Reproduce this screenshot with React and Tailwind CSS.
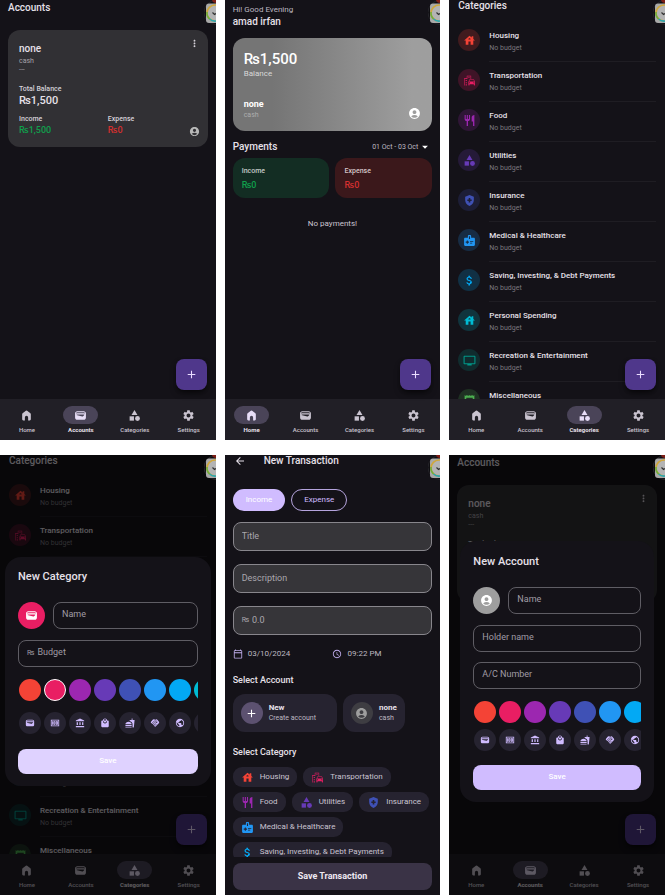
import React from "react";
import {
  MdAccountBalance,
  MdAccountCircle,
  MdAdd,
  MdArrowBack,
  MdArrowDropDown,
  MdAttachMoney,
  MdCategory,
  MdEmojiTransportation,
  MdFastfood,
  MdHandshake,
  MdHealthAndSafety,
  MdHouse,
  MdLocalMall,
  MdMedicalInformation,
  MdMoney,
  MdMoreVert,
  MdOutlineCalendarToday,
  MdPublic,
  MdReceipt,
  MdRestaurant,
  MdSchedule,
  MdSettings,
  MdTv,
  MdWallet,
} from "react-icons/md";

const categories = [
  { name: "Housing", Icon: MdHouse, fg: "text-[#f44336]", bg: "bg-[#f44336]/20" },
  { name: "Transportation", Icon: MdEmojiTransportation, fg: "text-[#e91e63]", bg: "bg-[#e91e63]/20" },
  { name: "Food", Icon: MdRestaurant, fg: "text-[#9c27b0]", bg: "bg-[#9c27b0]/20" },
  { name: "Utilities", Icon: MdCategory, fg: "text-[#673ab7]", bg: "bg-[#673ab7]/20" },
  { name: "Insurance", Icon: MdHealthAndSafety, fg: "text-[#3f51b5]", bg: "bg-[#3f51b5]/20" },
  { name: "Medical & Healthcare", Icon: MdMedicalInformation, fg: "text-[#2196f3]", bg: "bg-[#2196f3]/20" },
  { name: "Saving, Investing, & Debt Payments", Icon: MdAttachMoney, fg: "text-[#03a9f4]", bg: "bg-[#03a9f4]/20" },
  { name: "Personal Spending", Icon: MdHouse, fg: "text-[#00bcd4]", bg: "bg-[#00bcd4]/20" },
  { name: "Recreation & Entertainment", Icon: MdTv, fg: "text-[#009688]", bg: "bg-[#009688]/20" },
  { name: "Miscellaneous", Icon: MdReceipt, fg: "text-[#4caf50]", bg: "bg-[#4caf50]/20" },
];

const swatches = [
  { name: "Red", bg: "bg-[#f44336]" },
  { name: "Pink", bg: "bg-[#e91e63]" },
  { name: "Purple", bg: "bg-[#9c27b0]" },
  { name: "Deep purple", bg: "bg-[#673ab7]" },
  { name: "Indigo", bg: "bg-[#3f51b5]" },
  { name: "Blue", bg: "bg-[#2196f3]" },
  { name: "Light blue", bg: "bg-[#03a9f4]" },
  { name: "Cyan", bg: "bg-[#00bcd4]" },
];

const glyphs = [
  { name: "Wallet", Icon: MdWallet },
  { name: "Money", Icon: MdMoney },
  { name: "Bank", Icon: MdAccountBalance },
  { name: "Shopping", Icon: MdLocalMall },
  { name: "Fast food", Icon: MdFastfood },
  { name: "Handshake", Icon: MdHandshake },
  { name: "World", Icon: MdPublic },
  { name: "Other", Icon: null },
];

function HomeIcon({ className }) {
  return (
    <svg viewBox="0 0 24 24" fill="currentColor" className={className} aria-hidden="true">
      <path d="M10.8 3.4a2 2 0 0 1 2.4 0l6 4.6a2 2 0 0 1 .8 1.6V19a2 2 0 0 1-2 2h-3v-5.5a3 3 0 0 0-6 0V21H6a2 2 0 0 1-2-2V9.600a2 2 0 0 1 .8-1.600z" />
    </svg>
  );
}

/* Floating shortcut bubble that peeks in from the right edge of the screen. */
function EdgeBubble() {
  return (
    <svg viewBox="0 0 12 26" className="absolute right-0 top-0 z-30 h-[26px] w-3" aria-hidden="true">
      <circle cx="12" cy="12.500" r="12" fill="#0f0e12" stroke="#26252a" strokeWidth="1" />
      <path d="M8 0h4v3a4 4 0 0 1-4-3z" fill="#7d1d16" />
      <rect x="2" y="3.500" width="18" height="19.500" rx="3" fill="#a9a9a9" />
      <circle cx="11" cy="13" r="8" fill="#b4b4b4" stroke="#d0a73a" strokeWidth="1.600" />
      <path d="M3 12a8 8 0 0 0 2.600 7" fill="none" stroke="#6fae3c" strokeWidth="1.600" />
      <path d="M5.600 19A8 8 0 0 0 12 21" fill="none" stroke="#27a7b8" strokeWidth="1.600" />
      <path d="M8.500 12.500l2 2 1.500-1" fill="none" stroke="#333" strokeWidth="1.200" />
    </svg>
  );
}

function Phone({ children }) {
  return (
    <section className="relative flex min-h-0 min-w-0 flex-col overflow-hidden bg-[#141218] text-[#e6e0e9]">
      {children}
      <EdgeBubble />
    </section>
  );
}

function NavBar({ active }) {
  const items = [
    { name: "Home", Icon: HomeIcon },
    { name: "Accounts", Icon: MdWallet },
    { name: "Categories", Icon: MdCategory },
    { name: "Settings", Icon: MdSettings },
  ];
  return (
    <nav className="grid shrink-0 grid-cols-4 bg-[#211f26] pt-[7px] pb-[6px]">
      {items.map(({ name, Icon }) => (
        <a key={name} href="#" className="flex flex-col items-center gap-px">
          <span
            className={
              name === active
                ? "flex h-[18px] w-[35px] items-center justify-center rounded-full bg-[#4a4458] text-[#e8def8]"
                : "flex h-[18px] w-[35px] items-center justify-center rounded-full text-[#cac4d0]"
            }
          >
            <Icon className="size-[13px]" />
          </span>
          <span
            className={
              name === active
                ? "text-[6px] leading-[9px] font-bold text-[#e6e0e9]"
                : "text-[6px] leading-[9px] font-medium text-[#cac4d0]"
            }
          >
            {name}
          </span>
        </a>
      ))}
    </nav>
  );
}

function Fab() {
  return (
    <button
      type="button"
      aria-label="Add"
      className="absolute right-[9px] bottom-[50px] flex size-[31px] items-center justify-center rounded-lg bg-[#4f378b] text-[#eaddff] shadow-md shadow-black/50"
    >
      <MdAdd className="size-[13px]" />
    </button>
  );
}

function AccountsScreen() {
  return (
    <>
      <main className="min-h-0 flex-1 overflow-hidden px-2">
        <h1 className="h-[30px] text-[10px] leading-4 font-medium">Accounts</h1>
        <article className="relative rounded-xl bg-[#313034] px-[11px] pt-3 pb-[11px]">
          <h2 className="text-[10px] leading-[14px] font-medium">none</h2>
          <p className="text-[7px] leading-[10px] text-[#a5a2a9]">cash</p>
          <p className="text-[7px] leading-[9px] text-[#a5a2a9]">---</p>
          <p className="mt-[9px] text-[7px] leading-[10px] font-medium text-[#d5d0d8]">Total Balance</p>
          <p className="text-[11px] leading-[14px] font-medium">₨1,500</p>
          <div className="mt-1.5 grid grid-cols-2">
            <div>
              <p className="text-[7px] leading-[10px] font-medium text-[#d5d0d8]">Income</p>
              <p className="text-[9px] leading-3 font-medium text-[#109f4c]">₨1,500</p>
            </div>
            <div>
              <p className="text-[7px] leading-[10px] font-medium text-[#d5d0d8]">Expense</p>
              <p className="text-[9px] leading-3 font-medium text-[#d32f2f]">₨0</p>
            </div>
          </div>
          <button type="button" aria-label="More" className="absolute top-2 right-2">
            <MdMoreVert className="size-[11px] text-[#d5d0d8]" />
          </button>
          <MdAccountCircle className="absolute right-2 bottom-[10px] size-[11px] text-[#b8b8b8]" />
        </article>
      </main>
      <NavBar active="Accounts" />
      <Fab />
    </>
  );
}

function CategoriesScreen() {
  return (
    <>
      <main className="min-h-0 flex-1 overflow-hidden px-[9px]">
        <h1 className="h-[22px] text-[10px] leading-3 font-medium">Categories</h1>
        <ul>
          {categories.map(({ name, Icon, fg, bg }) => (
            <li key={name} className="flex gap-[9px] pt-[7px]">
              <span className={`flex size-[22px] shrink-0 items-center justify-center rounded-full ${bg} ${fg}`}>
                <Icon className="size-[13px]" />
              </span>
              <div className="min-w-0 flex-1 border-b border-[#1f1d23] pt-px pb-[7px]">
                <p className="text-[8px] leading-3 font-medium whitespace-nowrap">{name}</p>
                <p className="text-[7px] leading-3 text-[#7b787f]">No budget</p>
              </div>
            </li>
          ))}
        </ul>
      </main>
      <NavBar active="Categories" />
      <Fab />
    </>
  );
}

function HomeScreen() {
  return (
    <>
      <main className="min-h-0 flex-1 overflow-hidden px-2 pt-1">
        <p className="text-[8px] leading-[11px] text-[#bdb8c0]">Hi! Good Evening</p>
        <h1 className="text-[10px] leading-[14px] font-medium">amad irfan</h1>
        <article className="mt-[9px] rounded-xl bg-linear-to-r from-[#757575] from-20% to-[#9e9e9e] to-90% p-[11px] text-white">
          <p className="text-[15px] leading-5 font-medium">₨1,500</p>
          <p className="text-[8px] leading-[10px] text-[#d8d8d8]">Balance</p>
          <div className="mt-[19px] flex items-center justify-between">
            <div>
              <h2 className="text-[9px] leading-3 font-bold">none</h2>
              <p className="text-[7px] leading-[10px] text-[#adadad]">cash</p>
            </div>
            <MdAccountCircle className="mt-2 size-[13px]" />
          </div>
        </article>
        <div className="mt-2 flex items-center justify-between">
          <h2 className="text-[10px] leading-4 font-medium">Payments</h2>
          <button type="button" className="flex items-center text-[7px] text-[#bdb8c0]">
            01 Oct - 03 Oct
            <MdArrowDropDown className="size-[14px] text-white" />
          </button>
        </div>
        <div className="mt-[3px] grid grid-cols-2 gap-1.5">
          <div className="rounded-xl bg-[#132d23] px-[9px] pt-2 pb-[7px]">
            <p className="text-[7px] leading-[11px] font-medium text-[#c5ccc8]">Income</p>
            <p className="mt-0.5 text-[9px] leading-3 font-medium text-[#109f4c]">₨0</p>
          </div>
          <div className="rounded-xl bg-[#3b181b] px-[9px] pt-2 pb-[7px]">
            <p className="text-[7px] leading-[11px] font-medium text-[#d4c6c8]">Expense</p>
            <p className="mt-0.5 text-[9px] leading-3 font-medium text-[#d32f2f]">₨0</p>
          </div>
        </div>
        <p className="mt-5 text-center text-[8px] leading-3 text-[#cac4d0]">No payments!</p>
      </main>
      <NavBar active="Home" />
      <Fab />
    </>
  );
}

function OutlinedInput({ label, prefix }) {
  return (
    <label className="flex h-[27px] w-full min-w-0 items-center gap-[3px] rounded-lg border border-[#5f5d64] px-2">
      {prefix && <span className="text-[7px] text-[#a09ca5]">{prefix}</span>}
      <input
        type="text"
        aria-label={label}
        placeholder={label}
        className="w-full min-w-0 bg-transparent text-[9px] text-[#e6e0e9] outline-none placeholder:text-[#a09ca5]"
      />
    </label>
  );
}

function Swatches({ selected }) {
  return (
    <div className="flex gap-[3px] overflow-hidden px-px">
      {swatches.map(({ name, bg }) => (
        <button
          key={name}
          type="button"
          aria-label={name}
          className={
            name === selected
              ? `size-[22px] shrink-0 rounded-full border border-white ${bg}`
              : `size-[22px] shrink-0 rounded-full ${bg}`
          }
        />
      ))}
    </div>
  );
}

function Glyphs() {
  return (
    <div className="flex gap-[3px] overflow-hidden px-px">
      {glyphs.map(({ name, Icon }) => (
        <button
          key={name}
          type="button"
          aria-label={name}
          className="flex size-[22px] shrink-0 items-center justify-center rounded-full bg-[#262330] text-[#d0bcff]"
        >
          {Icon && <Icon className="size-[10px]" />}
        </button>
      ))}
    </div>
  );
}

function Scrim({ children }) {
  return <div className="absolute inset-0 z-10 flex items-center bg-black/60 pb-2">{children}</div>;
}

function NewCategoryDialog() {
  return (
    <Scrim>
      <form role="dialog" aria-label="New Category" className="mx-[5px] min-w-0 flex-1 rounded-2xl bg-[#141218] px-[13px] py-3">
        <h2 className="text-[11px] leading-4 font-medium">New Category</h2>
        <div className="mt-[17px] flex gap-2">
          <span className="flex size-[27px] shrink-0 items-center justify-center rounded-full bg-[#e91e63] text-white">
            <MdWallet className="size-[13px]" />
          </span>
          <OutlinedInput label="Name" />
        </div>
        <div className="mt-[11px] flex">
          <OutlinedInput label="Budget" prefix="₨" />
        </div>
        <div className="mt-3">
          <Swatches selected="Pink" />
        </div>
        <div className="mt-[11px]">
          <Glyphs />
        </div>
        <button type="button" className="mt-[15px] block h-[25px] w-full rounded-lg bg-[#dfd2ff] text-[8px] font-medium text-white">
          Save
        </button>
      </form>
    </Scrim>
  );
}

function NewAccountDialog() {
  return (
    <Scrim>
      <form role="dialog" aria-label="New Account" className="mx-[11px] min-w-0 flex-1 rounded-2xl bg-[#141218] px-[13px] pt-[13px] pb-3">
        <h2 className="text-[11px] leading-4 font-medium">New Account</h2>
        <div className="mt-[17px] flex gap-2">
          <span className="flex size-[27px] shrink-0 items-center justify-center rounded-full bg-[#9e9e9e] text-white">
            <MdAccountCircle className="size-[13px]" />
          </span>
          <OutlinedInput label="Name" />
        </div>
        <div className="mt-[11px] flex flex-col gap-[10px]">
          <OutlinedInput label="Holder name" />
          <OutlinedInput label="A/C Number" />
        </div>
        <div className="mt-3">
          <Swatches />
        </div>
        <div className="mt-[6px]">
          <Glyphs />
        </div>
        <button type="button" className="mt-[14px] block h-[25px] w-full rounded-lg bg-[#d0bcff] text-[8px] font-medium text-white">
          Save
        </button>
      </form>
    </Scrim>
  );
}

function FilledInput({ label, prefix }) {
  return (
    <label className="flex h-[29px] items-center gap-[3px] rounded-lg border border-[#88868c] bg-[#363539] px-2">
      {prefix && <span className="text-[7px] text-[#aaa7ae]">{prefix}</span>}
      <input
        type="text"
        aria-label={label}
        placeholder={label}
        className="w-full min-w-0 bg-transparent text-[9px] text-[#e6e0e9] outline-none placeholder:text-[#aaa7ae]"
      />
    </label>
  );
}

function NewTransactionScreen() {
  return (
    <form className="flex min-h-0 flex-1 flex-col px-2">
      <div className="min-h-0 flex-1 overflow-hidden">
        <header className="flex h-[34px] items-start gap-[18px] pl-px">
          <button type="button" aria-label="Back">
            <MdArrowBack className="size-3" />
          </button>
          <h1 className="text-[10px] leading-3 font-medium">New Transaction</h1>
        </header>
        <div className="flex gap-1.5">
          <button type="button" className="h-[22px] rounded-full bg-[#d0bcff] px-[13px] text-[8px] text-white">
            Income
          </button>
          <button type="button" className="h-[22px] rounded-full border border-[#b5a4dd] px-3 text-[8px] text-[#d0bcff]">
            Expense
          </button>
        </div>
        <div className="mt-[11px] flex flex-col gap-[13px]">
          <FilledInput label="Title" />
          <FilledInput label="Description" />
          <FilledInput label="0.0" prefix="₨" />
        </div>
        <div className="mt-[13px] grid grid-cols-2 text-[8px] leading-3 text-[#bdb8c0]">
          <button type="button" className="flex items-center gap-[5px]">
            <MdOutlineCalendarToday className="size-[10px] text-[#c0adec]" />
            03/10/2024
          </button>
          <button type="button" className="flex items-center gap-[5px]">
            <MdSchedule className="size-[10px] text-[#c0adec]" />
            09:22 PM
          </button>
        </div>
        <h2 className="mt-[14px] text-[9px] leading-3 font-medium">Select Account</h2>
        <div className="mt-2 flex gap-1.5">
          <button type="button" className="flex h-[38px] items-center gap-1.5 rounded-xl bg-[#262330] pr-[21px] pl-2 text-left">
            <span className="flex size-[22px] items-center justify-center rounded-full bg-[#5c5170] text-white">
              <MdAdd className="size-[13px]" />
            </span>
            <span>
              <span className="block text-[8px] leading-[10px] font-bold">New</span>
              <span className="block text-[7px] leading-[10px] text-[#bdb8c0]">Create account</span>
            </span>
          </button>
          <button type="button" className="flex h-[38px] items-center gap-1.5 rounded-xl bg-[#262330] px-2 text-left">
            <span className="flex size-[22px] items-center justify-center rounded-full bg-[#3e3d42] text-[#9e9e9e]">
              <MdAccountCircle className="size-[13px]" />
            </span>
            <span>
              <span className="block text-[8px] leading-[10px] font-bold">none</span>
              <span className="block text-[7px] leading-[10px] text-[#bdb8c0]">cash</span>
            </span>
          </button>
        </div>
        <h2 className="mt-[14px] text-[9px] leading-3 font-medium">Select Category</h2>
        <div className="mt-[9px] flex flex-wrap gap-x-1.5 gap-y-[5px]">
          {categories.slice(0, 7).map(({ name, Icon, fg }) => (
            <button
              key={name}
              type="button"
              className="flex h-5 items-center gap-1.5 rounded-[9px] bg-[#262330] px-2 text-[8px] whitespace-nowrap text-[#cac4d0]"
            >
              <Icon className={`size-[13px] ${fg}`} />
              {name}
            </button>
          ))}
        </div>
      </div>
      <button type="button" className="mt-1.5 mb-[5px] h-[27px] shrink-0 rounded-lg bg-[#3a3346] text-[9px] font-bold text-[#eee9f2]">
        Save Transaction
      </button>
    </form>
  );
}

export default function App() {
  return (
    <div className="grid h-screen grid-cols-3 grid-rows-2 gap-x-[9px] gap-y-[15px] overflow-hidden bg-white pr-px font-['Roboto','Noto_Sans',sans-serif]">
      <Phone>
        <AccountsScreen />
      </Phone>
      <Phone>
        <HomeScreen />
      </Phone>
      <Phone>
        <CategoriesScreen />
      </Phone>
      <Phone>
        <CategoriesScreen />
        <NewCategoryDialog />
      </Phone>
      <Phone>
        <NewTransactionScreen />
      </Phone>
      <Phone>
        <AccountsScreen />
        <NewAccountDialog />
      </Phone>
    </div>
  );
}
